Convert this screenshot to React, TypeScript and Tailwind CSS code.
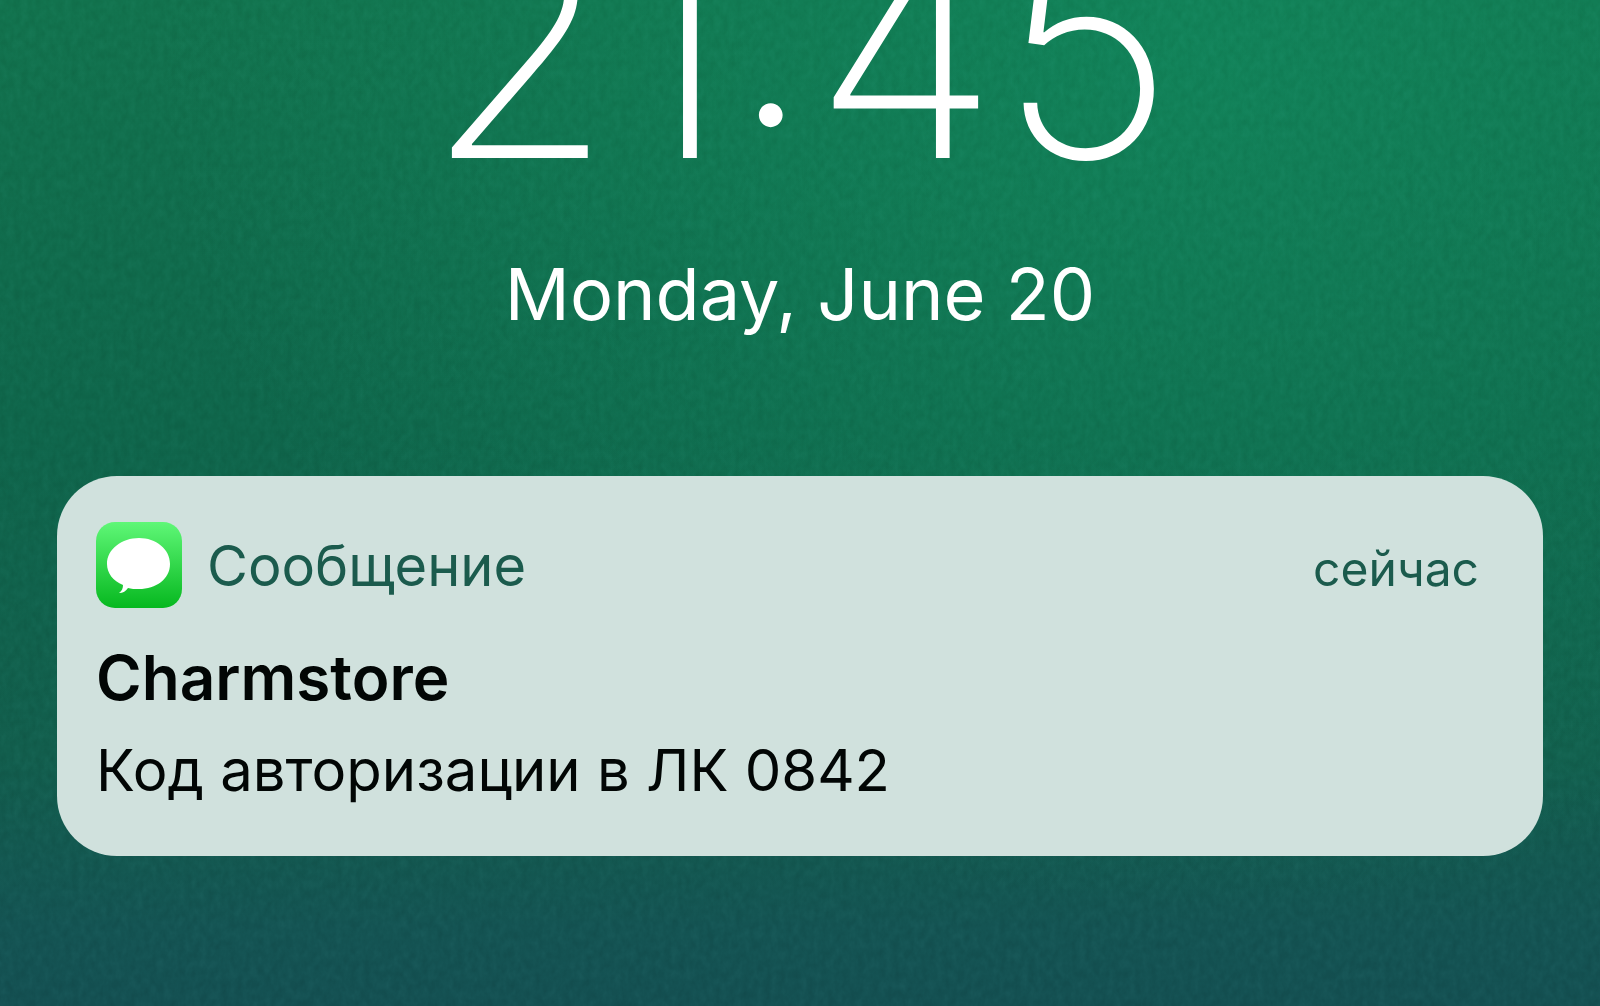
function MessagesIcon() {
  return (
    <svg viewBox="0 0 86 86" className="size-[86px] shrink-0" aria-hidden="true">
      <defs>
        <linearGradient id="messages-bg" x1="0" y1="0" x2="0" y2="1">
          <stop offset="0" stopColor="#5ff777" />
          <stop offset="1" stopColor="#06b81f" />
        </linearGradient>
      </defs>
      <rect width="86" height="86" rx="19" fill="url(#messages-bg)" />
      <path
        d="M43 16C60 16 74 27 74 42S60 67 43 67C39 67 35 67 32 66C30 69 27 71 23 71C26 69 27 66 27 63C17 59 11 51 11 42C11 27 26 16 43 16Z"
        fill="#fff"
      />
    </svg>
  );
}

// Fine paper grain over the wallpaper
function Grain() {
  return (
    <svg className="absolute inset-0 size-full opacity-12 mix-blend-soft-light" aria-hidden="true">
      <filter id="grain" colorInterpolationFilters="sRGB">
        <feTurbulence type="fractalNoise" baseFrequency="0.14 0.1" numOctaves="3" seed="4" />
        <feColorMatrix values="1 0 0 0 0  1 0 0 0 0  1 0 0 0 0  0 0 0 0 1" />
      </filter>
      <rect width="100%" height="100%" filter="url(#grain)" />
    </svg>
  );
}

function Clock() {
  return (
    <header className="flex flex-col items-center text-white">
      <time className="-mt-[105px] text-[304px] leading-[304px] font-extralight" dateTime="21:45">
        21:45
      </time>
      <p className="mt-[50px] text-[72px] leading-[90px]">Monday, June 20</p>
    </header>
  );
}

function Notification() {
  return (
    <article className="mx-[57px] mt-[137px] rounded-[60px] bg-[#d0e1dd] pt-[46px] pr-16 pb-12 pl-[39px]">
      <div className="flex items-center gap-[25px] text-[#1b5b4d]">
        <MessagesIcon />
        <div className="flex flex-1 items-baseline justify-between pt-1 leading-[64px]">
          <span className="text-[56px]">Сообщение</span>
          <span className="text-[48px]">сейчас</span>
        </div>
      </div>
      <h1 className="mt-8 text-[62px] leading-[76px] font-semibold text-[#020605]">Charmstore</h1>
      <p className="mt-4 text-[58px] leading-[76px] text-[#020605]">Код авторизации в ЛК 0842</p>
    </article>
  );
}

export default function App() {
  return (
    <main className="relative min-h-screen overflow-hidden bg-[radial-gradient(ellipse_65%_85%_at_75%_5%,#128e6199,transparent),linear-gradient(180deg,#12734e_0%,#0f664b_42%,#125e4d_75%,#145453_92%,#145052_100%)] font-[Inter,'Liberation_Sans',sans-serif]">
      <Grain />
      <div className="relative">
        <Clock />
        <Notification />
      </div>
    </main>
  );
}
